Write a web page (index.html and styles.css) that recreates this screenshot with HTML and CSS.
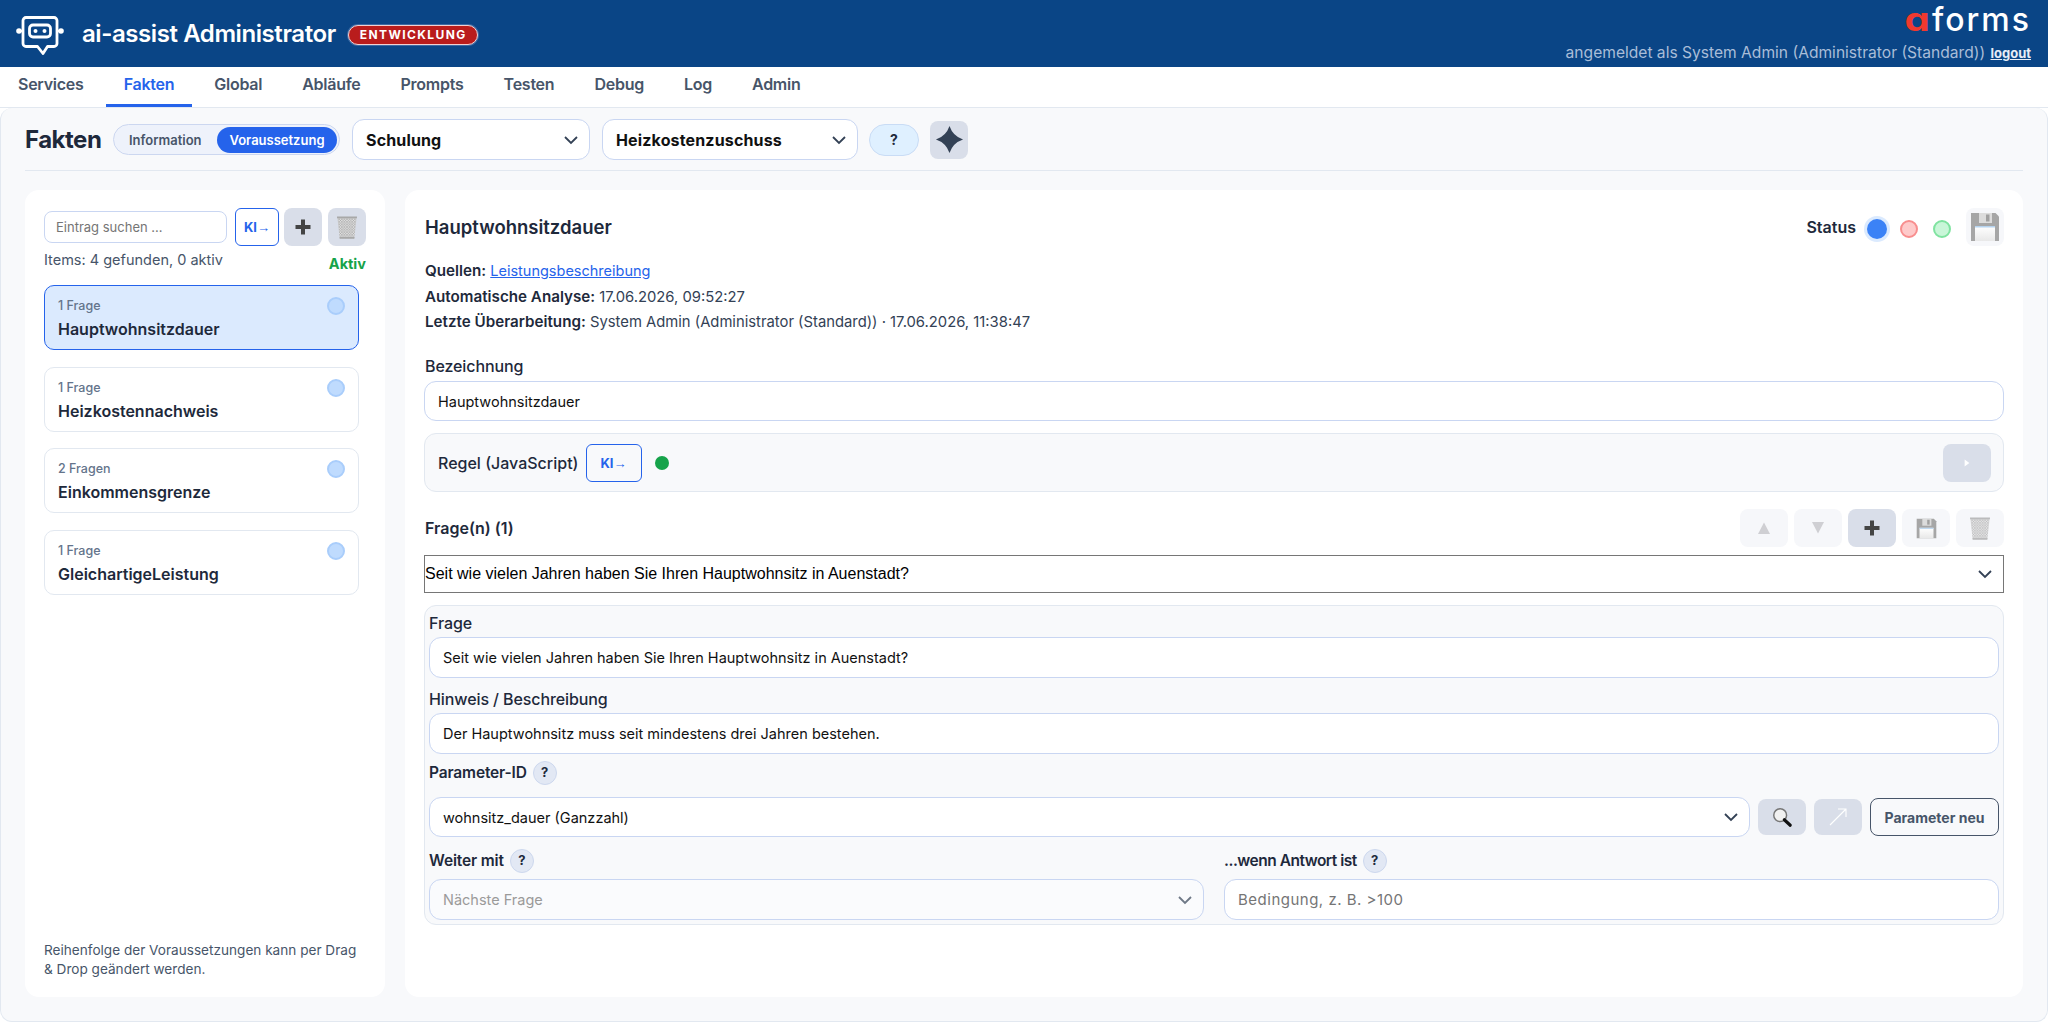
FILE: index.html
```html
<!DOCTYPE html>
<html lang="de">
<head>
    <meta charset="UTF-8">
    <meta name="viewport" content="width=device-width, initial-scale=1.0">
    <title>ai-assist Administrator</title>
    <link rel="stylesheet" href="styles.css">
</head>
<body>
    <svg class="icon-defs" width="0" height="0">
        <defs>
            <pattern id="mesh" width="3" height="3" patternUnits="userSpaceOnUse">
                <rect width="3" height="3" fill="#dcdcdc"/>
                <path d="M0 0l3 3M3 0l-3 3" stroke="#a2a2a2" stroke-width=".6"/>
            </pattern>
            <linearGradient id="label" x1="0" y1="0" x2="0" y2="1">
                <stop offset="0" stop-color="#ffffff"/>
                <stop offset="1" stop-color="#e8e8e8"/>
            </linearGradient>
            <symbol id="i-save" viewBox="0 0 30 30">
                <path d="M1 1h24.500L29 4.500V29H1z" fill="#a6a6a6"/>
                <path d="M9 1h13v10H9z" fill="#dcdcdc"/>
                <path d="M16 2.500h3.500v7H16z" fill="#a0a0a0"/>
                <path d="M5 14h20v15H5z" fill="url(#label)"/>
                <path d="M5 14h20v1.500H5z" fill="#b5d3ef"/>
            </symbol>
            <symbol id="i-trash" viewBox="0 0 30 30">
                <path d="M4 4.500h22l-2.500 23.500h-17z" fill="url(#mesh)"/>
                <path d="M3.500 3h23v2h-23zM6.500 26.500h17v2h-17z" fill="#a8a8a8"/>
            </symbol>
            <symbol id="i-plus" viewBox="0 0 30 30">
                <path d="M13 7.500h4V13h5.500v4H17v5.500h-4V17H7.500v-4H13z" fill="#444"/>
            </symbol>
            <symbol id="i-chevron" viewBox="0 0 16 16">
                <path d="M2 5l6 6 6-6" fill="none" stroke="#334155" stroke-width="1.800"/>
            </symbol>
        </defs>
    </svg>

    <header class="topbar">
        <div class="brand">
            <svg class="robot" viewBox="0 0 48 40" fill="none" stroke="#fff" stroke-width="2.800">
                <path d="M10 1.500h28a3 3 0 0 1 3 3v23a3 3 0 0 1-3 3h-6.500L27 37.500 21.500 30.500H10a3 3 0 0 1-3-3v-23a3 3 0 0 1 3-3z" stroke-linejoin="round"/>
                <rect x="13.500" y="9" width="21" height="12" rx="3.500"/>
                <circle cx="19.500" cy="15" r="2" fill="#fff" stroke="none"/>
                <circle cx="28.500" cy="15" r="2" fill="#fff" stroke="none"/>
                <circle cx="3" cy="15" r="2.800" fill="#fff" stroke="none"/>
                <circle cx="45" cy="15" r="2.800" fill="#fff" stroke="none"/>
                <path d="M4 15h3M41 15h3" stroke-width="2"/>
            </svg>
            <span class="app-title">ai-assist Administrator</span>
            <span class="env-badge">ENTWICKLUNG</span>
        </div>
        <div class="account">
            <div class="logo"><span class="logo-a">ɑ</span>forms</div>
            <div class="login">angemeldet als System Admin (Administrator (Standard)) <a href="#">logout</a></div>
        </div>
    </header>

    <nav class="tabs">
        <a href="#">Services</a>
        <a href="#" class="active">Fakten</a>
        <a href="#">Global</a>
        <a href="#">Abläufe</a>
        <a href="#">Prompts</a>
        <a href="#">Testen</a>
        <a href="#">Debug</a>
        <a href="#">Log</a>
        <a href="#">Admin</a>
    </nav>

    <main class="page">
        <div class="toolbar">
            <h1>Fakten</h1>
            <div class="toggle">
                <span>Information</span>
                <span class="on">Voraussetzung</span>
            </div>
            <div class="select select-top select-schulung">
                <span>Schulung</span>
                <svg class="chev"><use href="#i-chevron"/></svg>
            </div>
            <div class="select select-top select-service">
                <span>Heizkostenzuschuss</span>
                <svg class="chev"><use href="#i-chevron"/></svg>
            </div>
            <button class="help-pill">?</button>
            <button class="btn star-btn">
                <svg viewBox="0 0 30 30" width="29" height="29"><path d="M15 1Q18.500 11.500 29 15 18.500 18.500 15 29 11.500 18.500 1 15 11.500 11.500 15 1z" fill="#334155"/></svg>
            </button>
        </div>

        <div class="columns">
            <aside class="card side">
                <div class="search-row">
                    <input class="search" type="text" placeholder="Eintrag suchen ...">
                    <button class="ki ki-side">KI<span class="arrow">→</span></button>
                    <button class="btn"><svg class="ico"><use href="#i-plus"/></svg></button>
                    <button class="btn btn-last"><svg class="ico ico-trash"><use href="#i-trash"/></svg></button>
                </div>
                <div class="meta-row">
                    <span class="count">Items: 4 gefunden, 0 aktiv</span>
                    <span class="aktiv">Aktiv</span>
                </div>
                <ul class="items">
                    <li class="item selected"><small>1 Frage</small><b>Hauptwohnsitzdauer</b><i class="dot"></i></li>
                    <li class="item"><small>1 Frage</small><b>Heizkostennachweis</b><i class="dot"></i></li>
                    <li class="item"><small>2 Fragen</small><b>Einkommensgrenze</b><i class="dot"></i></li>
                    <li class="item"><small>1 Frage</small><b>GleichartigeLeistung</b><i class="dot"></i></li>
                </ul>
                <p class="hint">Reihenfolge der Voraussetzungen kann per Drag &amp; Drop geändert werden.</p>
            </aside>

            <section class="card detail">
                <div class="detail-head">
                    <h2>Hauptwohnsitzdauer</h2>
                    <span class="status-label">Status</span>
                    <i class="status blue"></i>
                    <i class="status red"></i>
                    <i class="status green"></i>
                    <button class="btn faint save-top"><svg class="ico"><use href="#i-save"/></svg></button>
                </div>
                <div class="facts">
                    <div><b>Quellen:</b> <a href="#">Leistungsbeschreibung</a></div>
                    <div><b>Automatische Analyse:</b> 17.06.2026, 09:52:27</div>
                    <div><b>Letzte Überarbeitung:</b> System Admin (Administrator (Standard)) · 17.06.2026, 11:38:47</div>
                </div>
                <label class="label label-name">Bezeichnung</label>
                <input class="field" type="text" value="Hauptwohnsitzdauer">
                <div class="rule">
                    <span class="rule-label">Regel (JavaScript)</span>
                    <button class="ki ki-rule">KI<span class="arrow">→</span></button>
                    <i class="rule-dot"></i>
                    <button class="btn play">
                        <svg viewBox="0 0 10 12" width="6" height="8"><path d="M1 0l8 6-8 6z" fill="#fff"/></svg>
                    </button>
                </div>
                <div class="questions-head">
                    <span class="questions-title">Frage(n) (1)</span>
                    <button class="btn faint">
                        <svg viewBox="0 0 14 14" width="14" height="14"><path d="M7 1.500l6 11.500H1z" fill="#cfcfd3"/></svg>
                    </button>
                    <button class="btn faint">
                        <svg viewBox="0 0 14 14" width="14" height="14"><path d="M7 12.500L1 1h12z" fill="#cfcfd3"/></svg>
                    </button>
                    <button class="btn"><svg class="ico"><use href="#i-plus"/></svg></button>
                    <button class="btn faint"><svg class="ico ico-small"><use href="#i-save"/></svg></button>
                    <button class="btn faint"><svg class="ico ico-trash"><use href="#i-trash"/></svg></button>
                </div>
                <div class="native">
                    <span>Seit wie vielen Jahren haben Sie Ihren Hauptwohnsitz in Auenstadt?</span>
                    <svg class="chev"><use href="#i-chevron"/></svg>
                </div>
                <div class="question">
                    <label class="label">Frage</label>
                    <input class="field tall" type="text" value="Seit wie vielen Jahren haben Sie Ihren Hauptwohnsitz in Auenstadt?">
                    <label class="label label-hint">Hinweis / Beschreibung</label>
                    <input class="field tall" type="text" value="Der Hauptwohnsitz muss seit mindestens drei Jahren bestehen.">
                    <div class="label-row label-param">
                        <label class="label">Parameter-ID</label><span class="help">?</span>
                    </div>
                    <div class="param-row">
                        <div class="select select-param">
                            <span>wohnsitz_dauer (Ganzzahl)</span>
                            <svg class="chev"><use href="#i-chevron"/></svg>
                        </div>
                        <button class="btn btn-short">
                            <svg viewBox="0 0 24 24" width="22" height="22">
                                <circle cx="10" cy="10" r="7" fill="#f1f1f1" stroke="#777" stroke-width="1.600"/>
                                <path d="M14.500 15l6.500 6" stroke="#111" stroke-width="3.400" stroke-linecap="round"/>
                            </svg>
                        </button>
                        <button class="btn btn-short">
                            <svg viewBox="0 0 20 20" width="20" height="20" fill="none" stroke="#fff" stroke-width="1.100"><path d="M2 18L18 2M10 2h8v8"/></svg>
                        </button>
                        <button class="param-new">Parameter neu</button>
                    </div>
                    <div class="two-col">
                        <div>
                            <div class="label-row">
                                <label class="label">Weiter mit</label><span class="help">?</span>
                            </div>
                            <div class="select select-next">
                                <span>Nächste Frage</span>
                                <svg class="chev"><use href="#i-chevron"/></svg>
                            </div>
                        </div>
                        <div>
                            <div class="label-row">
                                <label class="label label-tight">...wenn Antwort ist</label><span class="help">?</span>
                            </div>
                            <input class="field tall field-cond" type="text" placeholder="Bedingung, z. B. &gt;100">
                        </div>
                    </div>
                </div>
            </section>
        </div>
    </main>
</body>
</html>
```

FILE: styles.css
```css
* {
    box-sizing: border-box;
}
html, body {
    margin: 0;
    height: 1024px;
    overflow: hidden;
    background: #fff;
}
body {
    font-family: 'Inter', 'Liberation Sans', sans-serif;
    font-size: 14px;
    color: #1e293b;
}
button {
    font-family: inherit;
    cursor: pointer;
}
.icon-defs {
    position: absolute;
}

/* header */
.topbar {
    height: 67px;
    background: #0a4586;
    display: flex;
    justify-content: space-between;
    padding: 0 17px 0 16px;
}
.brand {
    display: flex;
    align-items: center;
}
.robot {
    width: 48px;
    height: 40px;
    margin-top: 5px;
}
.app-title {
    margin-left: 18px;
    font-size: 24px;
    font-weight: 600;
    color: #fff;
    letter-spacing: -0.42px;
}
.env-badge {
    margin: 3px 0 0 12px;
    height: 20px;
    padding: 0 10px 0 11px;
    line-height: 18px;
    background: #b91c1c;
    border: 1px solid #f3d0d0;
    border-radius: 10px;
    box-shadow: 0 0 0 1px #3d6aa3;
    color: #fff;
    font-size: 12px;
    font-weight: 700;
    letter-spacing: 1.4px;
}
.account {
    text-align: right;
}
.logo {
    font-size: 32px;
    font-weight: 500;
    color: #fff;
    letter-spacing: 2px;
}
.logo-a {
    display: inline-block;
    margin-left: 5px;
    transform: scaleX(1.25);
    transform-origin: right center;
    color: #f0392f;
    font-weight: 700;
}
.login {
    margin-top: 4px;
    font-size: 15.6px;
    color: #a9bdd8;
}
.login a {
    margin-left: 1px;
    font-size: 13px;
    font-weight: 700;
    color: #e6edf6;
}

/* tabs */
.tabs {
    height: 41px;
    display: flex;
    gap: 4px;
    background: #fff;
    border-bottom: 1px solid #e2e8f0;
}
.tabs a {
    padding: 0 18px;
    height: 40px;
    line-height: 35px;
    font-size: 16px;
    font-weight: 600;
    letter-spacing: -0.25px;
    color: #475569;
    text-decoration: none;
}
.tabs a.active {
    color: #2563eb;
    border-bottom: 3px solid #2563eb;
}

/* page */
.page {
    height: 914px;
    background: #f8f9fb;
    border: 1px solid #e2e8f0;
    border-top: 0;
    border-radius: 12px;
    padding: 11px 24px 0;
}
.toolbar {
    display: flex;
    align-items: center;
    height: 52px;
    padding-bottom: 10px;
    border-bottom: 1px solid #e2e8f0;
}
.toolbar h1 {
    margin: 0;
    width: 88px;
    font-size: 24px;
    font-weight: 700;
    letter-spacing: -0.5px;
    color: #1e293b;
}
.toggle {
    width: 227px;
    height: 31px;
    display: flex;
    align-items: center;
    justify-content: space-between;
    padding: 0 2px 0 15px;
    background: #eef2fb;
    border: 1px solid #ccd7f0;
    border-radius: 16px;
    font-size: 13px;
    font-weight: 600;
    color: #475569;
}
.toggle .on {
    width: 120px;
    height: 26px;
    line-height: 26px;
    text-align: center;
    background: #2563eb;
    border-radius: 13px;
    color: #fff;
}
.select {
    display: flex;
    align-items: center;
    justify-content: space-between;
    padding: 0 10px 0 13px;
    height: 40px;
    background: #fff;
    border: 1px solid #c9d6f2;
    border-radius: 12px;
    color: #111;
}
.chev {
    width: 16px;
    height: 16px;
    flex: none;
}
.select-top {
    height: 41px;
    font-size: 16px;
    font-weight: 700;
    letter-spacing: 0.15px;
}
.select-schulung {
    width: 238px;
    margin-left: 12px;
}
.select-service {
    width: 256px;
    margin-left: 12px;
}
.help-pill {
    width: 50px;
    height: 32px;
    margin-left: 11px;
    background: #dff0ff;
    border: 1px solid #c9dcf5;
    border-radius: 16px;
    font-size: 14px;
    font-weight: 700;
    color: #1e293b;
}
.btn {
    width: 48px;
    height: 38px;
    flex: none;
    display: flex;
    align-items: center;
    justify-content: center;
    padding: 0;
    background: #d9dee9;
    border: 0;
    border-radius: 8px;
}
.btn.faint {
    background: #f6f7fa;
}
.star-btn {
    width: 38px;
    margin-left: 11px;
}
.ico {
    width: 30px;
    height: 30px;
}
.ico-small {
    width: 21px;
    height: 21px;
}
.ico-trash {
    width: 26px;
    height: 26px;
}
.faint .ico-trash {
    opacity: 0.75;
}

/* columns */
.columns {
    display: flex;
    gap: 20px;
    margin-top: 19px;
}
.card {
    height: 807px;
    background: #fff;
    border-radius: 14px;
}
.side {
    width: 360px;
    display: flex;
    flex-direction: column;
    padding: 18px 19px 18px;
}
.search-row {
    display: flex;
    align-items: center;
    gap: 5px;
}
.search-row .btn {
    width: 38px;
}
.search-row .btn-last {
    margin-left: 1px;
}
.search {
    width: 183px;
    height: 32px;
    margin-right: 3px;
    padding: 0 11px;
    border: 1px solid #c9d6f2;
    border-radius: 8px;
    font: 13px 'Inter', sans-serif;
}
input::placeholder {
    color: #757575;
    opacity: 1;
}
.ki {
    height: 38px;
    background: #f8f9fb;
    border: 1px solid #2563eb;
    border-radius: 6px;
    font-size: 13px;
    font-weight: 700;
    color: #2563eb;
    padding: 0;
}
.arrow {
    font-family: 'Liberation Sans', sans-serif;
    font-weight: 400;
}
.ki-side {
    width: 44px;
    background: #fff;
}
.ki-rule {
    width: 56px;
    margin-left: 7px;
}
.meta-row {
    height: 39px;
    display: flex;
    justify-content: space-between;
}
.count {
    margin-top: 4px;
    font-size: 14.5px;
    line-height: 20px;
    color: #475569;
}
.aktiv {
    margin-top: 8px;
    font-size: 14.5px;
    line-height: 20px;
    font-weight: 700;
    color: #16a34a;
}
.items {
    list-style: none;
    margin: 0;
    padding: 0;
    width: 315px;
    display: flex;
    flex-direction: column;
    gap: 16.500px;
}
.item {
    position: relative;
    height: 65px;
    padding: 11px 13px;
    background: #fff;
    border: 1px solid #e2e8f0;
    border-radius: 10px;
}
.item.selected {
    background: #dbeafe;
    border-color: #2563eb;
}
.item small {
    display: block;
    font-size: 12.500px;
    line-height: 17px;
    font-weight: 500;
    color: #64748b;
}
.item b {
    display: block;
    margin-top: 5px;
    font-size: 16px;
    line-height: 20px;
    font-weight: 600;
    color: #1e293b;
}
.dot {
    position: absolute;
    top: 11px;
    right: 13px;
    width: 18px;
    height: 18px;
    background: #bfdbfe;
    border: 2px solid #a9cdfb;
    border-radius: 50%;
}
.hint {
    margin: auto 0 0;
    font-size: 13.600px;
    line-height: 19px;
    color: #475569;
}

/* detail */
.detail {
    width: 1618px;
    padding: 18px 19px 0;
}
.detail-head {
    display: flex;
    align-items: center;
    height: 38px;
}
.detail-head h2 {
    margin: 0 auto 0 1px;
    font-size: 18.500px;
    font-weight: 600;
    color: #1e293b;
}
.status-label {
    font-size: 16px;
    font-weight: 600;
    margin-right: 11px;
}
.status {
    display: block;
    width: 18px;
    height: 18px;
    margin-top: 3px;
    border-radius: 50%;
    border: 2px solid;
}
.status.blue {
    width: 20px;
    height: 20px;
    background: #3b82f6;
    border: 0;
    box-shadow: 0 0 0 3px #dbeafe;
}
.status.red {
    margin-left: 13px;
    background: #fecaca;
    border-color: #f88e8e;
}
.status.green {
    margin-left: 15px;
    background: #c9f6d8;
    border-color: #7fe3a0;
}
.save-top {
    width: 38px;
    margin-left: 15px;
}
.facts {
    margin: 12px 0 0 1px;
    font-size: 14.800px;
    line-height: 25.700px;
    color: #334155;
}
.facts div {
    height: 25.700px;
}
.facts b {
    font-size: 15.200px;
    font-weight: 600;
    color: #1e293b;
}
.facts a {
    font-size: 14.500px;
    color: #2563eb;
}
.label {
    display: block;
    font-size: 16px;
    line-height: 24px;
    font-weight: 500;
    letter-spacing: -0.1px;
    color: #1e293b;
}
.label-name {
    margin: 19px 0 3px 1px;
}
.field {
    display: block;
    width: 100%;
    height: 40px;
    padding: 0 13px;
    background: #fff;
    border: 1px solid #c9d6f2;
    border-radius: 12px;
    font: 14.500px 'Inter', sans-serif;
    color: #111;
}
.field.tall {
    height: 41px;
    margin-top: 2px;
}
.field-cond {
    font-size: 15px;
    letter-spacing: 0.5px;
}
.rule {
    display: flex;
    align-items: center;
    height: 59px;
    margin-top: 12px;
    padding: 0 12px 0 13px;
    background: #f8f9fb;
    border: 1px solid #e2e8f0;
    border-radius: 12px;
}
.rule-label {
    font-size: 16px;
    font-weight: 500;
}
.rule-dot {
    width: 14px;
    height: 14px;
    margin-left: 13px;
    background: #16a34a;
    border-radius: 50%;
}
.play {
    margin-left: auto;
}
.questions-head {
    display: flex;
    align-items: center;
    gap: 6px;
    height: 38px;
    margin-top: 17px;
}
.questions-title {
    margin: 0 auto 0 1px;
    font-size: 16px;
    font-weight: 600;
}
.native {
    display: flex;
    align-items: center;
    justify-content: space-between;
    height: 38px;
    margin-top: 8px;
    padding: 0 10px 0 0;
    background: #fff;
    border: 1px solid #767676;
    font-family: 'Liberation Sans', sans-serif;
    font-size: 16px;
    color: #000;
}
.question {
    height: 320px;
    margin-top: 12px;
    padding: 5px 4px 0;
    background: #f8f9fb;
    border: 1px solid #e2e8f0;
    border-radius: 12px;
}
.label-hint {
    margin: 9px 0 1px;
}
.label-row {
    display: flex;
    align-items: center;
    height: 24px;
}
.label-row .label {
    font-size: 15.500px;
    font-weight: 600;
    letter-spacing: -0.15px;
}
.label-row .label-tight {
    letter-spacing: -0.5px;
}
.label-param {
    margin-top: 7px;
}
.help {
    width: 24px;
    height: 24px;
    margin-left: 6px;
    background: #e2e8f4;
    border: 1px solid #cdd8ee;
    border-radius: 50%;
    text-align: center;
    font-size: 13px;
    line-height: 21px;
    font-weight: 700;
    color: #1e293b;
}
.param-row {
    display: flex;
    align-items: center;
    gap: 8px;
    margin-top: 12px;
}
.select-param {
    flex: 1;
    font-size: 14.500px;
}
.btn-short {
    height: 36px;
}
.param-new {
    width: 129px;
    height: 38px;
    padding: 0;
    background: #f8f9fb;
    border: 1px solid #475569;
    border-radius: 8px;
    font-size: 14px;
    font-weight: 700;
    color: #475569;
}
.two-col {
    display: grid;
    grid-template-columns: 775px 775px;
    gap: 20px;
    margin-top: 12px;
}
.select-next {
    height: 41px;
    margin-top: 6px;
    background: #fafbfd;
    font-size: 14.500px;
    color: #9a9a9a;
}
.select-next .chev {
    opacity: 0.7;
}
.two-col .field.tall {
    margin-top: 6px;
}
```
